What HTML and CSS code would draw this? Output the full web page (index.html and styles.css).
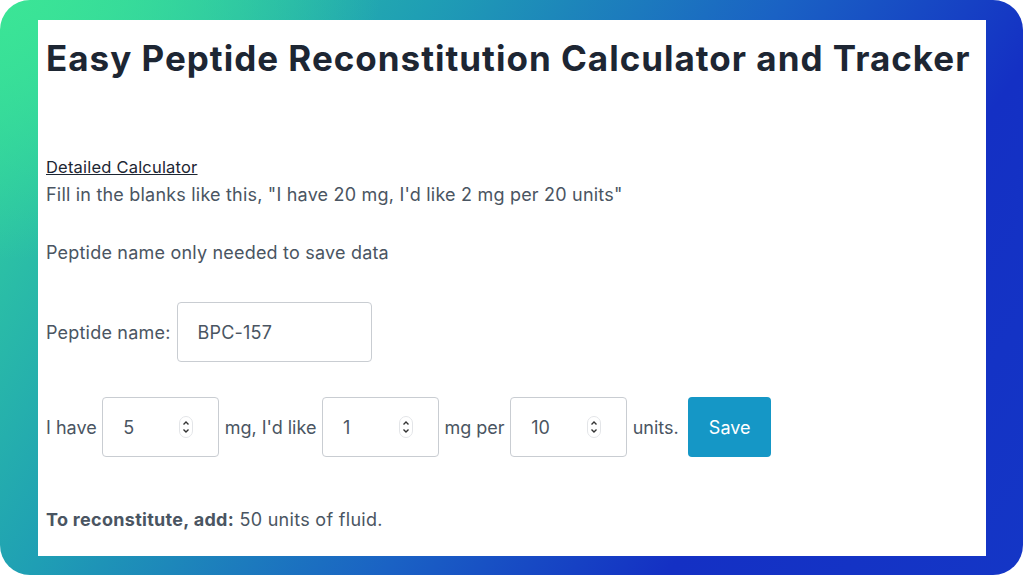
FILE: index.html
```html
<!DOCTYPE html>
<html lang="en">
<head>
    <meta charset="UTF-8">
    <meta name="viewport" content="width=device-width, initial-scale=1.0">
    <title>Easy Peptide Reconstitution Calculator and Tracker</title>
    <link rel="stylesheet" href="styles.css">
</head>
<body>
    <div class="frame">
        <div class="page">
            <h1>Easy Peptide Reconstitution Calculator and Tracker</h1>

            <div class="intro">
                <a href="#" class="link">Detailed Calculator</a>
                <p>Fill in the blanks like this, "I have 20 mg, I'd like 2 mg per 20 units"</p>
                <p class="note">Peptide name only needed to save data</p>
            </div>

            <div class="row name-row">
                <label for="name">Peptide name:</label>
                <input type="text" id="name" class="name" value="BPC-157">
            </div>

            <div class="row calc-row">
                <span>I have</span>
                <div class="num">
                    <input type="text" value="5">
                    <svg class="spin" width="14" height="22" viewBox="0 0 14 22"><rect x="0.5" y="0.5" width="13" height="21" rx="6.5" fill="none" stroke="#e3e5e8"/><path d="M4.5 8.5 L7 6 L9.5 8.5" fill="none" stroke="#333" stroke-width="1.4"/><path d="M4.5 13.5 L7 16 L9.5 13.5" fill="none" stroke="#333" stroke-width="1.4"/></svg>
                </div>
                <span>mg, I'd like</span>
                <div class="num">
                    <input type="text" value="1">
                    <svg class="spin" width="14" height="22" viewBox="0 0 14 22"><rect x="0.5" y="0.5" width="13" height="21" rx="6.5" fill="none" stroke="#e3e5e8"/><path d="M4.5 8.5 L7 6 L9.5 8.5" fill="none" stroke="#333" stroke-width="1.4"/><path d="M4.5 13.5 L7 16 L9.5 13.5" fill="none" stroke="#333" stroke-width="1.4"/></svg>
                </div>
                <span>mg per</span>
                <div class="num">
                    <input type="text" value="10">
                    <svg class="spin" width="14" height="22" viewBox="0 0 14 22"><rect x="0.5" y="0.5" width="13" height="21" rx="6.5" fill="none" stroke="#e3e5e8"/><path d="M4.5 8.5 L7 6 L9.5 8.5" fill="none" stroke="#333" stroke-width="1.4"/><path d="M4.5 13.5 L7 16 L9.5 13.5" fill="none" stroke="#333" stroke-width="1.4"/></svg>
                </div>
                <span>units.</span>
                <button class="save">Save</button>
            </div>

            <p class="result"><b>To reconstitute, add:</b> 50 units of fluid.</p>
        </div>
    </div>
</body>
</html>
```

FILE: styles.css
```css
body{
    margin: 0;
    background-color: #fff;
    font-family: Inter, "Noto Sans", sans-serif;
}
.frame{
    width: 1023px;
    height: 575px;
    box-sizing: border-box;
    padding: 20px 37px 19px 38px;
    border-radius: 30px;
    background:
        radial-gradient(ellipse 380px 260px at 0% 0%, #3be596 0%, rgba(59,229,150,0) 100%),
        linear-gradient(125deg, #35d99a 0%, #1f9fb4 30%, #1a62c4 55%, #1430c4 75%, #1436c6 100%);
}
.page{
    background-color: #fff;
    height: 100%;
    box-sizing: border-box;
    padding: 0 8px;
    color: #4a5562;
    font-size: 18px;
    letter-spacing: 0.2px;
}
h1{
    margin: 0;
    padding-top: 17px;
    font-size: 35px;
    font-weight: 700;
    color: #1d2633;
    letter-spacing: 1px;
    white-space: nowrap;
}
.intro{
    margin-top: 74px;
    line-height: 28px;
}
.link{
    color: #1d2633;
    font-size: 16.5px;
    text-decoration: underline;
}
p{
    margin: 0;
}
.note{
    margin-top: 30px;
}
.row{
    display: flex;
    align-items: center;
    gap: 6px;
}
.name-row{
    margin-top: 35px;
}
.name{
    width: 195px;
    height: 60px;
    box-sizing: border-box;
    border: 1px solid #c9cdd2;
    border-radius: 4px;
    padding: 0 20px;
    font: inherit;
    letter-spacing: inherit;
    color: #4a5562;
}
.calc-row{
    margin-top: 35px;
    letter-spacing: 0;
    gap: 5.5px;
}
.num{
    width: 117px;
    height: 60px;
    box-sizing: border-box;
    border: 1px solid #c9cdd2;
    border-radius: 4px;
    display: flex;
    align-items: center;
    padding: 0 25px 0 20px;
}
.num input{
    border: 0;
    width: 50px;
    flex: 1;
    padding: 0;
    font: inherit;
    color: #4a5562;
    background: transparent;
}
.spin{
    flex: none;
}
.save{
    margin-left: 4px;
    width: 83px;
    height: 60px;
    border: 0;
    border-radius: 4px;
    background-color: #1597c6;
    color: #fff;
    font: inherit;
}
.result{
    margin-top: 52px;
    letter-spacing: 0.3px;
}
.result b{
    font-weight: 700;
}
input:focus{
    outline: 0;
}
```
